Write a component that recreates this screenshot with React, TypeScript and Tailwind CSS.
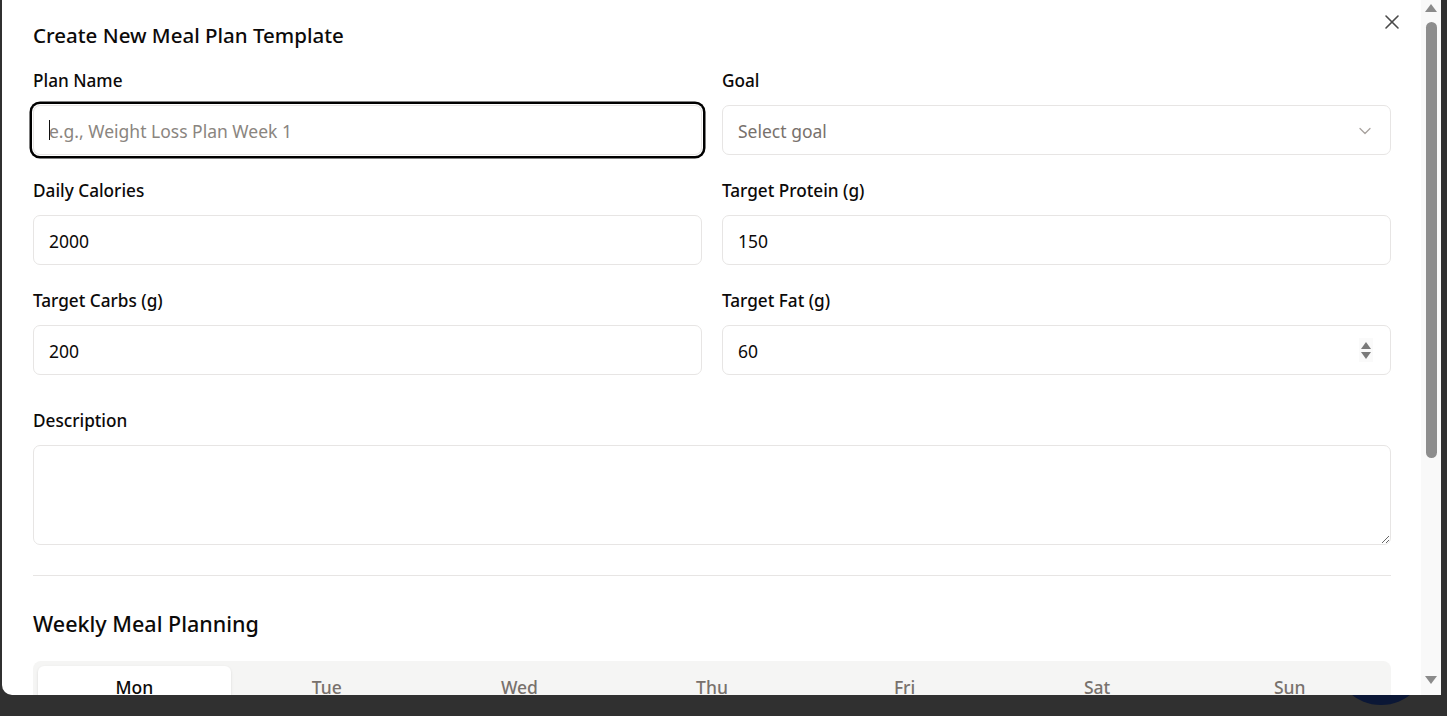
import { ChevronDown, X } from 'lucide-react';

const days = ['Mon', 'Tue', 'Wed', 'Thu', 'Fri', 'Sat', 'Sun'];

function Field({ label, children }: { label: string; children: React.ReactNode }) {
  return (
    <div className="flex flex-col">
      <label className="text-[17.2px] leading-[20px] font-medium text-[#0c0a09]">{label}</label>
      <div className="mt-[14px]">{children}</div>
    </div>
  );
}

const inputCls =
  'w-full h-[50px] rounded-[7px] border border-[#e7e5e4] bg-white px-[15px] pt-[2px] text-[17.5px] text-[#0c0a09] placeholder:text-[#8a8580] outline-none';

function Scrollbar() {
  return (
    <div className="w-[20px] h-full bg-[#f9f9f9] flex flex-col items-center pt-[4px] pb-[11px]">
      <svg width="12" height="8" viewBox="0 0 12 8">
        <path d="M6 0 L12 8 L0 8 Z" fill="#8b8b8b" />
      </svg>
      <div className="mt-[10px] w-[11px] h-[436px] rounded-full bg-[#8d8d8d]" />
      <div className="flex-1" />
      <svg width="12" height="8" viewBox="0 0 12 8">
        <path d="M0 0 L12 0 L6 8 Z" fill="#8b8b8b" />
      </svg>
    </div>
  );
}

export default function App() {
  return (
    <div
      className="relative h-screen w-full overflow-hidden bg-[#303030]"
      style={{ fontFamily: '"Noto Sans", "Open Sans", sans-serif' }}
    >
      {/* floating button peeking under the dialog */}
      <div className="absolute left-[1334px] top-[611px] w-[94px] h-[94px] rounded-full bg-[#0b1736]" />

      <div className="absolute left-[2px] top-0 w-[1439px] h-[695px] bg-white rounded-bl-[10px] overflow-hidden flex">
        <div className="relative flex-1 min-w-0 pl-[31px] pr-[30px] pt-[21px]">
          <button className="absolute right-[17px] top-[10px] text-[#4a4a4a]">
            <X size={24} strokeWidth={1.6} />
          </button>

          <h2 className="text-[20.5px] leading-[28px] font-medium text-[#0c0a09]">
            Create New Meal Plan Template
          </h2>

          <div className="mt-[22px] grid grid-cols-2 gap-x-[20px] gap-y-[26px]">
            <Field label="Plan Name">
              <div className="relative">
                <input
                  className={`${inputCls} ring-[2.5px] ring-black ring-offset-[1px] ring-offset-white`}
                  placeholder="e.g., Weight Loss Plan Week 1"
                />
                <span className="absolute left-[16px] top-[15px] h-[20px] w-px bg-[#111]" />
              </div>
            </Field>
            <Field label="Goal">
              <button className={`${inputCls} flex items-center justify-between text-left`}>
                <span className="text-[#78716c]">Select goal</span>
                <ChevronDown size={20} className="text-[#a8a29e]" strokeWidth={1.5} />
              </button>
            </Field>
            <Field label="Daily Calories">
              <input className={inputCls} defaultValue="2000" />
            </Field>
            <Field label="Target Protein (g)">
              <input className={inputCls} defaultValue="150" />
            </Field>
            <Field label="Target Carbs (g)">
              <input className={inputCls} defaultValue="200" />
            </Field>
            <Field label="Target Fat (g)">
              <div className="relative">
                <input className={inputCls} defaultValue="60" />
                <div className="absolute right-[18px] top-[13px] w-[14px] h-[24px] bg-[#fafafa] flex flex-col items-center justify-center gap-[3px]">
                  <svg width="10" height="7" viewBox="0 0 10 7">
                    <path d="M5 0 L10 7 L0 7 Z" fill="#7a7a7a" />
                  </svg>
                  <svg width="10" height="7" viewBox="0 0 10 7">
                    <path d="M0 0 L10 0 L5 7 Z" fill="#7a7a7a" />
                  </svg>
                </div>
              </div>
            </Field>
          </div>

          <div className="mt-[36px]">
            <Field label="Description">
              <textarea className="block w-full h-[100px] rounded-[7px] border border-[#e7e5e4] px-[15px] py-[10px] text-[17.5px] outline-none resize-y" />
            </Field>
          </div>

          <div className="mt-[30px] h-px bg-[#e7e5e4]" />

          <h3 className="mt-[34px] text-[21.5px] leading-[28px] font-medium text-[#0c0a09]">
            Weekly Meal Planning
          </h3>

          <div className="mt-[23px] h-[50px] rounded-[8px] bg-[#f5f5f4] p-[5px] grid grid-cols-7">
            {days.map((d, i) => (
              <div
                key={d}
                className={`flex items-center justify-center rounded-[6px] pt-[2px] text-[17.5px] font-medium ${
                  i === 0 ? 'bg-white text-[#0c0a09] shadow-sm' : 'text-[#78716c]'
                }`}
              >
                {d}
              </div>
            ))}
          </div>
        </div>
        <Scrollbar />
      </div>
    </div>
  );
}
